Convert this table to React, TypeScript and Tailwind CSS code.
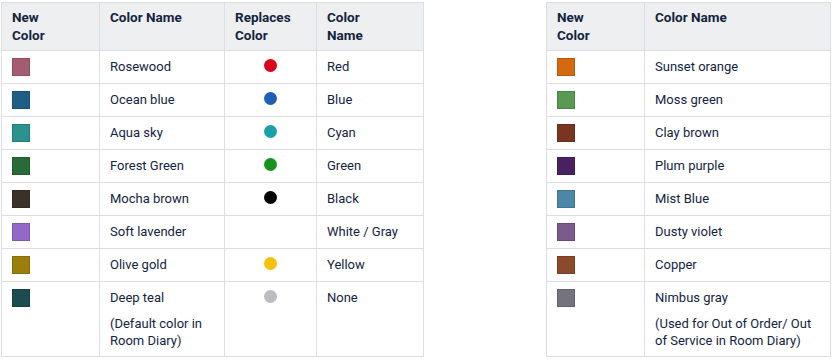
import React from 'react'

type Row = {
  swatch: string
  name: string
  note?: string
  dot?: string
  replaces?: string
}

const leftRows: Row[] = [
  { swatch: '#a65c70', name: 'Rosewood', dot: '#d9001b', replaces: 'Red' },
  { swatch: '#1f5e85', name: 'Ocean blue', dot: '#1d5fb4', replaces: 'Blue' },
  { swatch: '#2b928e', name: 'Aqua sky', dot: '#18a1a6', replaces: 'Cyan' },
  { swatch: '#286b38', name: 'Forest Green', dot: '#15931d', replaces: 'Green' },
  { swatch: '#3c3129', name: 'Mocha brown', dot: '#000000', replaces: 'Black' },
  { swatch: '#9468c9', name: 'Soft lavender', replaces: 'White / Gray' },
  { swatch: '#9a7f0b', name: 'Olive gold', dot: '#f4c20c', replaces: 'Yellow' },
  { swatch: '#1d4c50', name: 'Deep teal', note: '(Default color in Room Diary)', dot: '#bbbbc0', replaces: 'None' },
]

const rightRows: Row[] = [
  { swatch: '#d4690f', name: 'Sunset orange' },
  { swatch: '#5a9951', name: 'Moss green' },
  { swatch: '#7a3520', name: 'Clay brown' },
  { swatch: '#4a2160', name: 'Plum purple' },
  { swatch: '#4b88a8', name: 'Mist Blue' },
  { swatch: '#7b5a8c', name: 'Dusty violet' },
  { swatch: '#8a4a2b', name: 'Copper' },
  { swatch: '#75737e', name: 'Nimbus gray', note: '(Used for Out of Order/ Out of Service in Room Diary)' },
]

function Swatch({ color }: { color: string }) {
  return (
    <div
      className="w-[18px] h-[18px] border border-black/15"
      style={{ backgroundColor: color }}
    />
  )
}

function Th({ children }: { children: React.ReactNode }) {
  return (
    <th className="border border-[#dcdee3] bg-[#eeeff1] px-[10px] pt-[5px] pb-[6px] text-left align-top font-bold leading-[18px] text-[13.5px]">
      {children}
    </th>
  )
}

function Td({ children, center }: { children?: React.ReactNode; center?: boolean }) {
  return (
    <td
      className={
        'border border-[#dcdee3] px-[10px] pt-[7px] pb-[7px] align-top leading-[18px] ' +
        (center ? 'text-center' : '')
      }
    >
      {children}
    </td>
  )
}

function NameCell({ row }: { row: Row }) {
  return (
    <Td>
      <p>{row.name}</p>
      {row.note && <p className="mt-[8px] leading-[17px]">{row.note}</p>}
    </Td>
  )
}

export default function App() {
  return (
    <div className="min-h-screen bg-white pl-px pt-[2px] font-['Roboto',sans-serif] text-[13px] text-[#14243f]">
      <div className="flex items-start gap-[122px]">
        <table className="table-fixed border-collapse w-[422px]">
          <colgroup>
            <col className="w-[98px]" />
            <col className="w-[125px]" />
            <col className="w-[92px]" />
            <col className="w-[107px]" />
          </colgroup>
          <thead>
            <tr>
              <Th>New<br />Color</Th>
              <Th>Color Name</Th>
              <Th>Replaces<br />Color</Th>
              <Th>Color<br />Name</Th>
            </tr>
          </thead>
          <tbody>
            {leftRows.map((r) => (
              <tr key={r.name}>
                <Td><Swatch color={r.swatch} /></Td>
                <NameCell row={r} />
                <Td center>
                  {r.dot && (
                    <div
                      className="mx-auto mt-px w-[13px] h-[13px] rounded-full"
                      style={{ backgroundColor: r.dot }}
                    />
                  )}
                </Td>
                <Td>{r.replaces}</Td>
              </tr>
            ))}
          </tbody>
        </table>

        <table className="table-fixed border-collapse w-[284px]">
          <colgroup>
            <col className="w-[98px]" />
            <col className="w-[186px]" />
          </colgroup>
          <thead>
            <tr>
              <Th>New<br />Color</Th>
              <Th>Color Name</Th>
            </tr>
          </thead>
          <tbody>
            {rightRows.map((r) => (
              <tr key={r.name}>
                <Td><Swatch color={r.swatch} /></Td>
                <NameCell row={r} />
              </tr>
            ))}
          </tbody>
        </table>
      </div>
    </div>
  )
}
